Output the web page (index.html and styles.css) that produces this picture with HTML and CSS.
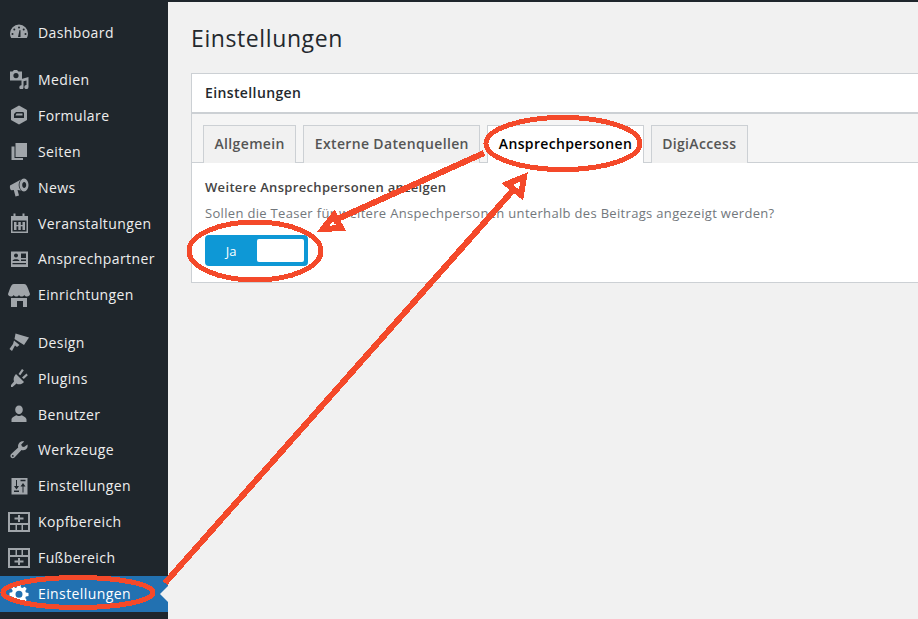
FILE: index.html
```html
<!DOCTYPE html>
<html lang="de">
<head>
<meta charset="utf-8">
<title>Einstellungen</title>
<link rel="stylesheet" href="styles.css">
</head>
<body>
<div class="topbar"></div>
<div class="layout">
  <nav class="sidebar">
    <ul class="menu-group">
      <li class="menu-item"><svg class="ic" viewBox="0 0 20 20"><path d="M10 2.500a9 9 0 0 0-9 9c0 1.700.4 3.200 1.200 4.500h15.600a9 9 0 0 0 1.200-4.500 9 9 0 0 0-9-9zM9 15l1.500-7 1 .2L11.500 15z" fill-rule="evenodd"/><g class="cut"><circle cx="10" cy="5.500" r="1"/><circle cx="5.300" cy="7.500" r="1"/><circle cx="14.700" cy="7.500" r="1"/><circle cx="3.500" cy="12" r="1"/><circle cx="16.500" cy="12" r="1"/></g></svg><span>Dashboard</span></li>
    </ul>
    <ul class="menu-group">
      <li class="menu-item"><svg class="ic" viewBox="0 0 20 20"><path fill-rule="evenodd" d="M1 2.500h2.500L5 1h3l1.500 1.500H13v9H1zM7 4a2.600 2.600 0 1 0 0 5.200A2.600 2.600 0 0 0 7 4z"/><path d="M12.500 10l7-2v10a2.100 2.100 0 1 1-2-2.100V11.500l-3 .8v6a2.100 2.100 0 1 1-2-2.100z"/></svg><span>Medien</span></li>
      <li class="menu-item"><svg class="ic" viewBox="0 0 20 20"><path fill-rule="evenodd" d="M10 .5l8 4.500v10l-8 4.500-8-4.500V5zM7 7h6.500c1 0 1.500.5 1.500 1.500V13H5V9zM7.500 8.500L6.500 10.500h7V8.500z"/></svg><span>Formulare</span></li>
      <li class="menu-item"><svg class="ic" viewBox="0 0 20 20"><path d="M6.500 2H18v14H6.500z"/><path d="M2.500 5.500h3V17H14v2H2.500z"/></svg><span>Seiten</span></li>
      <li class="menu-item"><svg class="ic" viewBox="0 0 20 20"><path d="M1 8.500L12 2.500c-1.500 1.500-2.300 3.500-2.300 5.500s.8 4 2.300 5.500l-3.500-.5 1.500 5.500-3.500 1-1.700-6.500-2 .3C1.500 13.500.5 11 1 8.500z"/><path fill-rule="evenodd" d="M15 1.500c2.500 0 4.500 3 4.500 6.500s-2 6.500-4.500 6.500-4.500-3-4.500-6.500 2-6.500 4.500-6.500zm.2 3.500c-1.200 0-2 1.400-2 3s.8 3 2 3 2-1.400 2-3-.8-3-2-3z"/></svg><span>News</span></li>
      <li class="menu-item"><svg class="ic" viewBox="0 0 20 20"><path fill-rule="evenodd" d="M2 3h2.500V.5h2V3h7V.5h2V3H19v17H2zM3.500 7.500V18.500h14V7.500z"/><path d="M5 9h2.500v8H5zM9.300 9h2.500v8H9.300zM13.500 9H16v8h-2.500z"/><path d="M5 12h11v1.300H5z"/></svg><span>Veranstaltungen</span></li>
      <li class="menu-item"><svg class="ic" viewBox="0 0 20 20"><path d="M2 2.500h17V18H2z"/><g class="cut"><circle cx="7" cy="6.500" r="2"/><path d="M3.500 12c0-2.500 7-2.500 7 0zM12 4.500h5V9h-5zM12 10.500h5V12h-5zM3.500 14h13.500v1.300H3.500z"/></g></svg><span>Ansprechpartner</span></li>
      <li class="menu-item"><svg class="ic ic-wide" viewBox="0 0 22 24"><path d="M6 1h10c2 0 3 2 4 4.500L22 11c0 1.500-1.500 2.500-3 2.500-1 0-2-.5-2.700-1.500-.6 1-1.800 1.500-2.800 1.500S11.800 13 11 12c-.8 1-1.500 1.500-2.500 1.500S6.300 13 5.700 12C5 13 4 13.500 3 13.500c-1.500 0-3-1-3-2.500l2-5.500C3 3 4 1 6 1z"/><path d="M3 15h16v9h-4v-6H9v6H3z"/></svg><span>Einrichtungen</span></li>
    </ul>
    <ul class="menu-group">
      <li class="menu-item"><svg class="ic" viewBox="0 0 20 20"><path d="M6.500 1.500L20 5.500l-5 7.500-9.500-6z"/><path d="M5 8.500l5.500 4.500-2.500 2-2-1.500-3 5.500L.5 17l3.500-5z"/></svg><span>Design</span></li>
      <li class="menu-item"><svg class="ic" viewBox="0 0 20 20"><path d="M7 6l8 8c-2 2.500-5.500 3-7.500 1.500L3.500 19H2v-2l3-3.500C4 11 5 8 7 6z"/><path d="M9.500 6l3.500-5 1.800 1.300-3.500 5zM13 9.500l4.500-4 1.300 1.700-4 3.700z"/></svg><span>Plugins</span></li>
      <li class="menu-item"><svg class="ic" viewBox="0 0 20 20"><path d="M10 1.500c2.300 0 3.800 2 3.800 4.200 0 2.300-1.500 4.500-3.800 4.500S6.200 8 6.200 5.700c0-2.200 1.500-4.200 3.800-4.200z"/><path d="M2.500 18v-2.500c0-2 3-3.500 5-4.300 1 1 4 1 5 0 2 .8 5 2.300 5 4.300V18z"/></svg><span>Benutzer</span></li>
      <li class="menu-item"><svg class="ic" viewBox="0 0 20 20"><path d="M18.500 4.500c.5 2-.2 4-1.700 5-1.300.8-3 1-4.300.5L5.500 17.500c-1 1-2.700 1-3.500 0s-.8-2.500.2-3.500l7-6.500c-.5-1.500 0-3.300 1-4.500 1-1.200 3-2 5-1.500L12.200 4.500l.8 2 2 .5zM3.800 15a.9.9 0 1 0 0 1.800.9.9 0 0 0 0-1.800z" fill-rule="evenodd"/></svg><span>Werkzeuge</span></li>
      <li class="menu-item"><svg class="ic" viewBox="0 0 20 20"><path d="M2.500 2h16v16.500h-16z"/><g class="cut"><path d="M7 4h1v6h2l-2.500 3.500L5 10h2zM5 14.500h5V16H5zM13.500 16.500h1V10.500h2L14 7l-2.500 3.500h2zM11.500 3.800h5V5.300h-5z"/></g></svg><span>Einstellungen</span></li>
      <li class="menu-item"><svg class="ic ic-grid" viewBox="0 0 22 20"><path fill-rule="evenodd" d="M0 0h22v20H0zM2 2v9h18V2zM2 13v5h5.500v-5zM9 13v5h4.500v-5zM15 13v5h5v-5z"/><path d="M10 3h2v2.500h3.500v2H12V10h-2V7.500H6.500v-2H10z"/></svg><span>Kopfbereich</span></li>
      <li class="menu-item"><svg class="ic ic-grid" viewBox="0 0 22 20"><path fill-rule="evenodd" d="M0 0h22v20H0zM2 2v5h5.500V2zM9 2v5h4.500V2zM15 2v5h5V2zM2 9v9h18V9z"/><path d="M10 10h2v2.500h3.500v2H12V17h-2v-2.500H6.500v-2H10z"/></svg><span>Fußbereich</span></li>
      <li class="menu-item active"><svg class="ic" viewBox="0 0 20 20"><path fill-rule="evenodd" d="M8.500 1h3l.5 2.500 1.500.6L15.700 2.700l2 2-1.400 2.200.6 1.500 2.600.5v3l-2.600.5-.6 1.500 1.400 2.200-2 2-2.200-1.400-1.500.6-.5 2.700h-3l-.5-2.700-1.500-.6-2.200 1.400-2-2 1.400-2.200-.6-1.500L.5 11.700v-3l2.600-.5.6-1.500-1.400-2.200 2-2 2.200 1.400 1.500-.6zM10 6.700a3.500 3.500 0 1 0 0 7 3.500 3.500 0 0 0 0-7z"/></svg><span>Einstellungen</span></li>
    </ul>
  </nav>
  <main class="content">
    <h1 class="page-title">Einstellungen</h1>
    <section class="card">
      <h2 class="card-title">Einstellungen</h2>
      <div class="card-body">
        <div class="tabs">
          <a class="tab">Allgemein</a>
          <a class="tab">Externe Datenquellen</a>
          <a class="tab tab-active">Ansprechpersonen</a>
          <a class="tab">DigiAccess</a>
        </div>
        <div class="pane">
          <h3 class="field-label">Weitere Ansprechpersonen anzeigen</h3>
          <p class="field-help">Sollen die Teaser für weitere Anspechpersonen unterhalb des Beitrags angezeigt werden?</p>
          <div class="toggle"><span class="toggle-on">Ja</span><span class="toggle-knob"></span></div>
        </div>
      </div>
    </section>
  </main>
</div>
<svg class="annotations" viewBox="0 0 918 619">
  <ellipse cx="78" cy="592.500" rx="75" ry="15"/>
  <ellipse cx="563" cy="143.500" rx="77" ry="26"/>
  <ellipse cx="255" cy="251" rx="66" ry="29"/>
  <path class="arrow" d="M484 153L333 221"/>
  <path class="arrow" d="M323 229L334 215L341 228Z"/>
  <path class="arrow" d="M165 583L515 188"/>
  <path class="arrow" d="M524 177L507 184L521 195Z"/>
</svg>
</body>
</html>
```
FILE: styles.css
```css
* { box-sizing: border-box; }
html, body { margin: 0; height: 100%; overflow: hidden; }
body {
  background: #f1f1f1;
  font-family: "Open Sans", sans-serif;
  font-size: 13px;
  color: #444;
}
.topbar { height: 2px; background: #1f262c; }
.layout { display: flex; height: 617px; }
.sidebar {
  width: 168px;
  flex: none;
  background: #1f262c;
  padding-top: 12px;
}
.menu-group { list-style: none; margin: 0 0 11px; padding: 0; }
.menu-item {
  height: 36px;
  display: flex;
  align-items: center;
  gap: 9px;
  padding-left: 9px;
  font-size: 14px;
  letter-spacing: .4px;
  color: #eee;
  position: relative;
}
.menu-group:nth-child(2) .menu-item:nth-child(n+6) span,
.menu-group:last-child .menu-item:nth-child(n+4) span { margin-top: -2px; }
.ic { width: 20px; height: 20px; fill: #a0a5aa; flex: none; }
.ic-wide { width: 22px; height: 24px; margin-left: -1px; margin-right: -1px; }
.ic-grid { width: 22px; height: 20px; margin-left: -1px; margin-right: -1px; }
.cut { fill: #1f262c; }
.menu-item.active { background: #2271b1; color: #fff; }
.menu-item.active .ic { fill: #fff; }
.menu-item.active::after {
  content: "";
  position: absolute;
  right: 0;
  top: 50%;
  margin-top: -8px;
  border: 8px solid transparent;
  border-right-color: #f1f1f1;
  border-left-width: 0;
}
.content { flex: 1; min-width: 0; overflow: hidden; padding: 0 0 0 23px; }
.page-title {
  margin: 0;
  padding: 19px 0 17px;
  font-size: 23px;
  line-height: 35px;
  font-weight: 400;
  letter-spacing: .6px;
  color: #23282d;
}
.card {
  width: 800px;
  background: #fff;
  border: 1px solid #ccd0d4;
}
.card-title {
  margin: 0;
  height: 40px;
  padding: 0 13px;
  font-size: 14px;
  line-height: 37px;
  font-weight: 600;
  letter-spacing: .38px;
  color: #23282d;
  border-bottom: 2px solid #ccd0d4;
}
.card-body { background: #f5f5f5; }
.tabs {
  display: flex;
  gap: 7px;
  padding: 11px 0 0 11px;
  border-bottom: 1px solid #ccd0d4;
  height: 49px;
}
.tab {
  height: 38px;
  padding: 0 10.5px;
  font-size: 14px;
  line-height: 36px;
  font-weight: 600;
  letter-spacing: .35px;
  color: #555;
  background: #f1f1f1;
  border: 1px solid #ccd0d4;
  border-bottom: 0;
}
.tab-active { background: #fff; color: #000; }
.pane { background: #fff; height: 119px; padding: 14px 13px 0; }
.field-label {
  margin: 0;
  font-size: 13px;
  line-height: 20px;
  font-weight: 600;
  letter-spacing: .33px;
  color: #444;
}
.field-help {
  margin: 6px 0 0;
  font-size: 13px;
  line-height: 20px;
  letter-spacing: .32px;
  color: #72777c;
}
.toggle {
  display: flex;
  align-items: center;
  width: 103px;
  height: 31px;
  margin-top: 12px;
  padding-right: 4px;
  background: #0e98d6;
  border-radius: 4px;
}
.toggle-on { flex: 1; text-align: center; font-size: 13px; color: #fff; }
.toggle-knob { width: 47px; height: 23px; background: #fff; border-radius: 2px; }
.annotations {
  position: absolute;
  left: 0;
  top: 0;
  width: 918px;
  height: 619px;
  fill: none;
  stroke: #f4492a;
  stroke-width: 5px;
  shape-rendering: crispEdges;
}
.annotations .arrow { stroke-width: 6px; }
```
